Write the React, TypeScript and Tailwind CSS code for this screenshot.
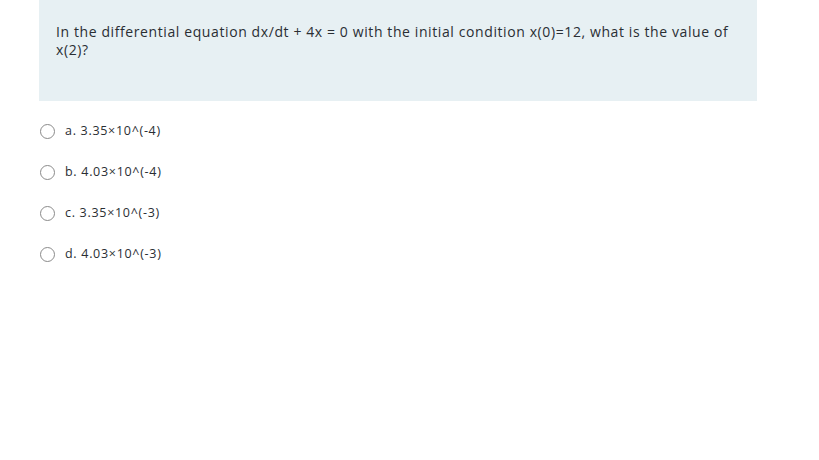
const options = [
  "a. 3.35×10^(-4)",
  "b. 4.03×10^(-4)",
  "c. 3.35×10^(-3)",
  "d. 4.03×10^(-3)",
];

export default function App() {
  return (
    <div className="w-[819px] h-[460px] bg-white" style={{ fontFamily: '"Open Sans", "Noto Sans", sans-serif' }}>
      <div className="ml-[39px] w-[718px] h-[101px] bg-[#e7f0f3] pl-[17px] pr-4 pt-[23px] text-[14px] leading-[18px] tracking-[0.6px] text-[#2a2e33]">
        In the differential equation dx/dt + 4x = 0 with the initial condition x(0)=12, what is the value of
        <br />
        x(2)?
      </div>
      <div className="ml-[40px] mt-[22px] flex flex-col gap-[25px]">
        {options.map((o) => (
          <label key={o} className="flex items-center gap-[10px] h-[16px]">
            <span className="w-[15px] h-[15px] rounded-full border border-[#8a8a8a] bg-white" />
            <span className="text-[12.5px] tracking-[0.7px] text-[#2a2e33]">{o}</span>
          </label>
        ))}
      </div>
    </div>
  );
}
